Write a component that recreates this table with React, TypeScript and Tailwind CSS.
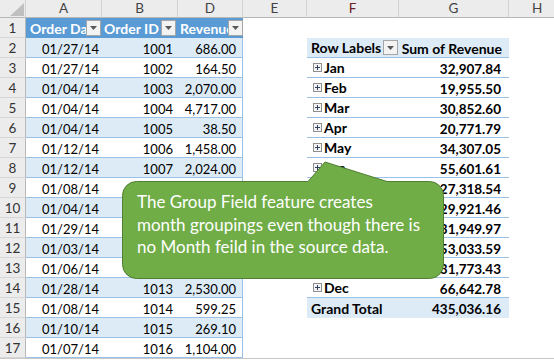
import React from 'react';

const dates = ['', '01/27/14', '01/27/14', '01/04/14', '01/04/14', '01/04/14', '01/12/14', '01/12/14', '01/08/14', '01/04/14', '01/29/14', '01/03/14', '01/06/14', '01/28/14', '01/08/14', '01/10/14', '01/07/14'];
const revenue = ['', '686.00', '164.50', '2,070.00', '4,717.00', '38.50', '1,458.00', '2,024.00', '', '', '', '', '', '2,530.00', '599.25', '269.10', '1,104.00'];

const months: [string, string][] = [
  ['Jan', '32,907.84'],
  ['Feb', '19,955.50'],
  ['Mar', '30,852.60'],
  ['Apr', '20,771.79'],
  ['May', '34,307.05'],
  ['Jun', '55,601.61'],
  ['Jul', '27,318.54'],
  ['Aug', '29,921.46'],
  ['Sep', '31,949.97'],
  ['Oct', '53,033.59'],
  ['Nov', '31,773.43'],
  ['Dec', '66,642.78'],
];

function DropButton({ small = false }: { small?: boolean }) {
  return (
    <div
      className={`shrink-0 flex items-center justify-center border border-[#a6a6a6] bg-[#f3f3f3] ${
        small ? 'w-[15px] h-[15px]' : 'w-[15px] h-[16px]'
      }`}
    >
      <svg width="7" height="4" viewBox="0 0 7 4">
        <path d="M0 0 H7 L3.5 4 Z" fill="#595959" />
      </svg>
    </div>
  );
}

function PlusBox() {
  return (
    <svg width="9" height="9" viewBox="0 0 9 9" className="shrink-0">
      <rect x="0.5" y="0.5" width="8" height="8" fill="#f4f4f4" stroke="#8f8f8f" />
      <path d="M2 4.5 H7 M4.5 2 V7" stroke="#2f3f5f" strokeWidth="1" />
    </svg>
  );
}

function RowHead({ n }: { n: number }) {
  return (
    <div className="w-[26px] shrink-0 h-5 bg-[#ececec] border-b border-r border-b-[#d6d6d6] border-r-[#b8b8b8] text-center text-[#333] text-[13.5px] leading-[19px] pt-[1px]">
      {n}
    </div>
  );
}

function PivotCells({ row }: { row: number }) {
  if (row === 2) {
    return (
      <>
        <div className="w-[92px] shrink-0 h-5 bg-[#ddebf7] border-b border-[#9bc2e6] flex items-center pl-[4px] font-bold text-[14px]">
          <span className="leading-[20px] pt-[1px] flex-1 whitespace-nowrap">Row Labels</span>
          <div className="mr-[1px]">
            <DropButton small />
          </div>
        </div>
        <div className="w-[110px] shrink-0 h-5 bg-[#ddebf7] border-b border-[#9bc2e6] text-right pr-[7px] font-bold text-[14px] leading-[20px] pt-[1px] whitespace-nowrap">
          Sum of Revenue
        </div>
      </>
    );
  }
  if (row >= 3 && row <= 14) {
    const [label, value] = months[row - 3];
    return (
      <>
        <div className="w-[92px] shrink-0 h-5 border-b border-[#9bc2e6] flex items-center pl-[6px] gap-[2px] font-bold text-[14px]">
          <PlusBox />
          <span className="leading-[20px] pt-[1px]">{label}</span>
        </div>
        <div className="w-[110px] shrink-0 h-5 border-b border-[#9bc2e6] text-right pr-[8px] font-bold text-[13.5px] leading-[20px] pt-[1px]">
          {value}
        </div>
      </>
    );
  }
  if (row === 15) {
    return (
      <>
        <div className="w-[92px] shrink-0 h-5 bg-[#ddebf7] pl-[4px] font-bold text-[14px] leading-[20px] pt-[1px] whitespace-nowrap">
          Grand Total
        </div>
        <div className="w-[110px] shrink-0 h-5 bg-[#ddebf7] text-right pr-[8px] font-bold text-[13.5px] leading-[20px] pt-[1px]">
          435,036.16
        </div>
      </>
    );
  }
  return (
    <>
      <div className="w-[92px] shrink-0 h-5" />
      <div className="w-[110px] shrink-0 h-5" />
    </>
  );
}

function DataRow({ row }: { row: number }) {
  const band = row % 2 === 0 ? 'bg-[#ddebf7]' : 'bg-white';
  const id = 999 + row;
  return (
    <div className="flex h-5">
      <RowHead n={row} />
      <div className={`w-[76px] shrink-0 h-5 ${band} border-b border-[#9bc2e6] text-right pr-[3px] leading-[20px] pt-[1px]`}>
        {dates[row - 1]}
      </div>
      <div className={`w-[76px] shrink-0 h-5 ${band} border-b border-[#9bc2e6] text-right pr-[5px] leading-[20px] pt-[1px]`}>
        {revenue[row - 1] ? id : ''}
      </div>
      <div className={`w-[65px] shrink-0 h-5 ${band} border-b border-r border-[#9bc2e6] text-right pr-[6px] leading-[20px] pt-[1px]`}>
        {revenue[row - 1]}
      </div>
      <div className="w-[64px] shrink-0 h-5" />
      <PivotCells row={row} />
      <div className="w-[45px] shrink-0 h-5" />
    </div>
  );
}

function ColHead({ w, label, color = 'text-[#444]' }: { w: string; label: string; color?: string }) {
  return (
    <div className={`${w} shrink-0 h-[18px] bg-[#ececec] border-r border-b border-r-[#d2d2d2] border-b-[#b8b8b8] text-center text-[13.5px] leading-[17px] ${color}`}>
      {label}
    </div>
  );
}

function HeaderCell({ w, label, pl }: { w: string; label: string; pl: string }) {
  return (
    <div className={`${w} shrink-0 h-5 bg-[#5b9bd5] flex items-center ${pl}`}>
      <span className="flex-1 overflow-hidden whitespace-nowrap text-white font-bold text-[14px] leading-[20px] pt-[1px]">{label}</span>
      <DropButton />
    </div>
  );
}

export default function App() {
  const rows = Array.from({ length: 16 }, (_, i) => i + 2);
  return (
    <div className="relative w-[554px] h-[360px] overflow-hidden bg-white text-[13px] text-black font-['Lato',sans-serif]">
      {/* column letters */}
      <div className="flex">
        <div className="w-[26px] shrink-0 h-[18px] bg-[#ececec] border-r border-b border-r-[#d2d2d2] border-b-[#b8b8b8] flex items-end justify-end pr-[1px] pb-[1px]">
          <svg width="14" height="13" viewBox="0 0 14 13">
            <path d="M14 0 V13 H0 Z" fill="#bfbfbf" />
          </svg>
        </div>
        <ColHead w="w-[76px]" label="A" />
        <ColHead w="w-[76px]" label="B" />
        <ColHead w="w-[65px]" label="D" />
        <ColHead w="w-[64px]" label="E" />
        <ColHead w="w-[92px]" label="F" color="text-[#6b2424]" />
        <ColHead w="w-[110px]" label="G" />
        <div className="w-[45px] shrink-0 h-[18px] bg-[#ececec] border-b border-b-[#b8b8b8] text-[13.5px] leading-[17px] text-[#444] pl-[23px]">
          H
        </div>
      </div>

      {/* table header row */}
      <div className="flex h-5">
        <RowHead n={1} />
        <HeaderCell w="w-[76px]" label="Order Date" pl="pl-[4px] pr-[1px]" />
        <HeaderCell w="w-[76px]" label="Order ID" pl="pl-[2px] pr-[2px]" />
        <HeaderCell w="w-[65px]" label="Revenue" pl="pl-[2px]" />
        <div className="w-[64px] shrink-0 h-5" />
        <PivotCells row={1} />
        <div className="w-[45px] shrink-0 h-5" />
      </div>

      {rows.map(r => (
        <DataRow key={r} row={r} />
      ))}

      <div className="border-t border-[#c8c8c8]" />

      {/* callout */}
      <div className="absolute left-[122px] top-[161px] w-[322px] h-[118px]">
        <svg width="322" height="118" viewBox="0 0 322 118" className="absolute inset-0">
          <path
            d="M14.5 20.5 H186 L203 1 L265 20.5 H307.5 A14 14 0 0 1 321.5 34.5 V103.5 A14 14 0 0 1 307.5 117.5 H14.5 A14 14 0 0 1 0.5 103.5 V34.5 A14 14 0 0 1 14.5 20.5 Z"
            fill="#70ad47"
            stroke="#507e32"
          />
        </svg>
        <div className="relative pl-[15px] pt-[30px] text-white text-[17px] leading-[22.5px] whitespace-nowrap">
          <div>The Group Field feature creates</div>
          <div>month groupings even though there is</div>
          <div>no Month feild in the source data.</div>
        </div>
      </div>
    </div>
  );
}
